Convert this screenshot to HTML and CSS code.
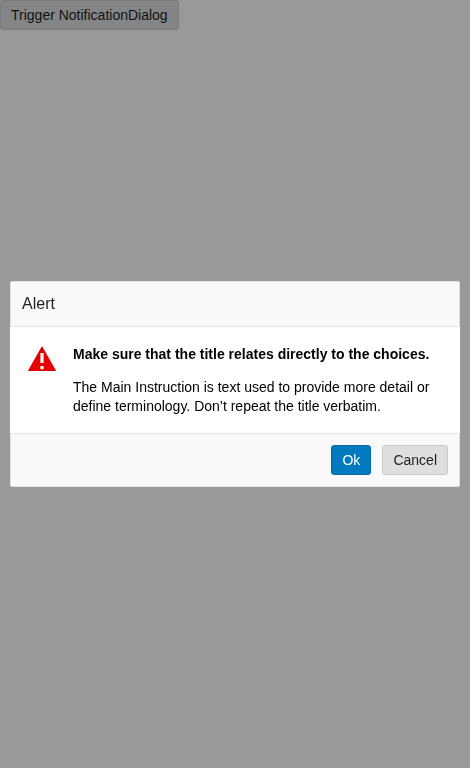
FILE: index.html
```html
<!DOCTYPE html>
<html lang="en">
<head>
<meta charset="utf-8">
<meta name="viewport" content="width=device-width, initial-scale=1">
<title>Notification Dialog</title>
<link rel="stylesheet" href="styles.css">
</head>
<body>
<button class="button" type="button">Trigger NotificationDialog</button>
<div class="overlay">
  <section class="dialog" role="alertdialog" aria-modal="true" aria-labelledby="dialog-title" aria-describedby="dialog-body">
    <header class="dialog-header"><h1 class="dialog-title" id="dialog-title">Alert</h1></header>
    <div class="dialog-body" id="dialog-body">
      <svg class="alert-icon" viewBox="0 0 28 25" aria-hidden="true">
        <path fill="#e60000" d="M13.4 1.100a.7.7 0 0 1 1.200 0L27.900 24.500a.3.3 0 0 1-.3.5H.4a.3.3 0 0 1-.3-.5z"/>
        <path fill="#fff" d="M12.400 7h3.200v10h-3.200zM12.400 20h3.200v3.200h-3.200z"/>
      </svg>
      <div class="message">
        <h2 class="message-title">Make sure that the title relates directly to the choices.</h2>
        <p class="message-text">The Main Instruction is text used to provide more detail or define terminology. Don’t repeat the title verbatim.</p>
      </div>
    </div>
    <footer class="dialog-footer">
      <button class="button button-primary" type="button">Ok</button>
      <button class="button" type="button">Cancel</button>
    </footer>
  </section>
</div>
</body>
</html>
```
FILE: styles.css
```css
* { box-sizing: border-box; }

body {
  margin: 0;
  font: 14px/19px "Liberation Sans", Arial, sans-serif;
  color: #000;
  background: #fff;
}

.button {
  display: block;
  min-width: 40px;
  height: 30px;
  padding: 0 10px;
  border: 1px solid #c8cbcc;
  border-radius: 3px;
  background: #dddee0;
  color: #1d1f21;
  font: inherit;
}

.button-primary {
  border-color: #006cae;
  background: #0079bf;
  color: #fff;
}

.overlay {
  position: fixed;
  inset: 0;
  display: grid;
  align-items: center;
  padding: 10px;
  background: rgba(0, 0, 0, 0.4);
}

.dialog {
  border-radius: 3px;
  background: #fff;
  overflow: hidden;
}

.dialog-header,
.dialog-footer {
  border: 1px solid #dfe0e1;
  background: #f9f9f9;
}

.dialog-header {
  padding: 12px 11px;
  border-radius: 3px 3px 0 0;
}

.dialog-title {
  margin: 0;
  font-size: 16px;
  font-weight: 400;
  line-height: 20px;
  color: #1d1f21;
}

.dialog-body {
  display: flex;
  gap: 17px;
  padding: 18px 18px 17px;
}

.alert-icon {
  flex: none;
  width: 28px;
  height: 25px;
  margin-top: 1px;
}

.message-title {
  margin: 0 0 14px;
  font-size: 14px;
}

.message-text { margin: 0; }

.dialog-footer {
  display: flex;
  justify-content: flex-end;
  gap: 11px;
  padding: 11px;
  border-radius: 0 0 3px 3px;
}
```
